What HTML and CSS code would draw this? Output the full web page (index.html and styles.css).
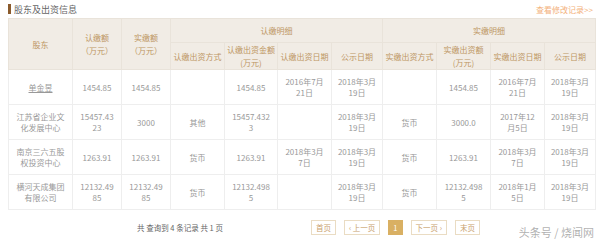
FILE: index.html
```html
<!DOCTYPE html>
<html lang="zh-CN">
<head>
  <meta charset="UTF-8" />
  <title>股东及出资信息</title>
  <link rel="stylesheet" href="styles.css">
</head>
<body>
  <div id="panel">
    <div class="panel-head">
      <div class="panel-title"><span class="title-bar"></span>股东及出资信息</div>
      <a class="history-link" href="#">查看修改记录&gt;&gt;</a>
    </div>

    <table class="holders">
      <colgroup>
        <col class="c-name"><col class="c-amount"><col class="c-amount">
        <col class="c-way"><col class="c-money"><col class="c-date"><col class="c-pub">
        <col class="c-way"><col class="c-date"><col class="c-date"><col class="c-pub">
      </colgroup>
      <thead>
        <tr class="head-top">
          <th rowspan="2">股东</th>
          <th rowspan="2">认缴额<br>（万元）</th>
          <th rowspan="2">实缴额<br>（万元）</th>
          <th colspan="4">认缴明细</th>
          <th colspan="4">实缴明细</th>
        </tr>
        <tr class="head-sub">
          <th>认缴出资方式</th>
          <th>认缴出资金额(万元)</th>
          <th>认缴出资日期</th>
          <th>公示日期</th>
          <th>实缴出资方式</th>
          <th class="narrow">实缴出资额(万元)</th>
          <th>实缴出资日期</th>
          <th>公示日期</th>
        </tr>
      </thead>
      <tbody>
        <tr>
          <td><a class="holder-name" href="#">单金昱</a></td>
          <td>1454.85</td>
          <td>1454.85</td>
          <td></td>
          <td>1454.85</td>
          <td>2016年7月21日</td>
          <td>2018年3月19日</td>
          <td></td>
          <td>1454.85</td>
          <td>2016年7月21日</td>
          <td>2018年3月19日</td>
        </tr>
        <tr>
          <td>江苏省企业文化发展中心</td>
          <td>15457.4323</td>
          <td>3000</td>
          <td>其他</td>
          <td>15457.4323</td>
          <td></td>
          <td>2018年3月19日</td>
          <td>货币</td>
          <td>3000.0</td>
          <td>2017年12月5日</td>
          <td>2018年3月19日</td>
        </tr>
        <tr>
          <td>南京三六五股权投资中心</td>
          <td>1263.91</td>
          <td>1263.91</td>
          <td>货币</td>
          <td>1263.91</td>
          <td>2018年3月7日</td>
          <td>2018年3月19日</td>
          <td>货币</td>
          <td>1263.91</td>
          <td>2018年3月7日</td>
          <td>2018年3月19日</td>
        </tr>
        <tr>
          <td>横河天成集团有限公司</td>
          <td>12132.4985</td>
          <td>12132.4985</td>
          <td>货币</td>
          <td>12132.4985</td>
          <td></td>
          <td>2018年3月19日</td>
          <td>货币</td>
          <td>12132.4985</td>
          <td>2018年1月5日</td>
          <td>2018年3月19日</td>
        </tr>
      </tbody>
    </table>

    <div class="pager">
      <div class="pager-info">共 查询到 4 条记录 共 1 页</div>
      <div class="pager-buttons">
        <a class="page-btn" href="#">首页</a>
        <a class="page-btn" href="#">‹ 上一页</a>
        <a class="page-btn active" href="#">1</a>
        <a class="page-btn" href="#">下一页 ›</a>
        <a class="page-btn" href="#">末页</a>
      </div>
    </div>
  </div>

  <div class="watermark">头条号 / 烧闻网</div>
</body>
</html>
```

FILE: styles.css
```css
html, body {
  margin: 0;
  padding: 0;
  background: #fff;
  font-family: "Noto Sans CJK SC", "Noto Sans", sans-serif;
  overflow: hidden;
}

#panel {
  padding: 0 5px 0 8px;
}

.panel-head {
  display: flex;
  justify-content: space-between;
  align-items: center;
  height: 18px;
}

.panel-title {
  display: flex;
  align-items: center;
  font-size: 9px;
  color: #666;
}

.title-bar {
  display: inline-block;
  width: 3px;
  height: 10px;
  background: #8a5a2c;
  margin-right: 3px;
}

.history-link {
  font-size: 8px;
  color: #f3b17b;
  text-decoration: none;
  margin-right: 2px;
}

.holders {
  width: 587px;
  table-layout: fixed;
  border-collapse: collapse;
  font-size: 8px;
}

.c-name { width: 64px; }
.c-amount { width: 49px; }
.c-way { width: 54px; }
.c-money { width: 53px; }
.c-date { width: 54px; }
.c-pub { width: 51px; }

.holders th {
  background: #f1ece5;
  color: #bd9663;
  font-weight: normal;
  line-height: 13px;
  padding: 0 1px;
  border: 1px solid #e9e3da;
  text-align: center;
}

.holders th.narrow {
  padding: 0 3px;
}

.head-top {
  height: 24px;
}

.head-sub {
  height: 26px;
}

.holders td {
  height: 34px;
  padding: 0 6px;
  line-height: 11px;
  color: #999;
  text-align: center;
  border: 1px solid #eeeeee;
  word-break: break-all;
}

/* 公示日期 columns */
.holders td:nth-child(7),
.holders td:nth-child(11) {
  padding: 0 3px;
  word-break: normal;
}

.holder-name {
  color: #999;
  text-decoration: underline;
}

.pager {
  display: flex;
  justify-content: center;
  align-items: center;
  gap: 88px;
  margin-top: 10px;
  padding-left: 14px;
  height: 15px;
}

.pager-info {
  font-size: 7.5px;
  color: #666;
}

.pager-buttons {
  display: flex;
  gap: 8px;
}

.page-btn {
  display: block;
  height: 13px;
  line-height: 13px;
  padding: 0 4px;
  font-size: 7.5px;
  color: #c9a16d;
  border: 1px solid #eadcc3;
  text-decoration: none;
}

.page-btn.active {
  background: #d9b063;
  border-color: #d9b063;
  color: #fff;
}

.watermark {
  position: absolute;
  right: 6px;
  bottom: 2px;
  font-size: 11px;
  color: rgba(120, 120, 120, 0.6);
}
```
